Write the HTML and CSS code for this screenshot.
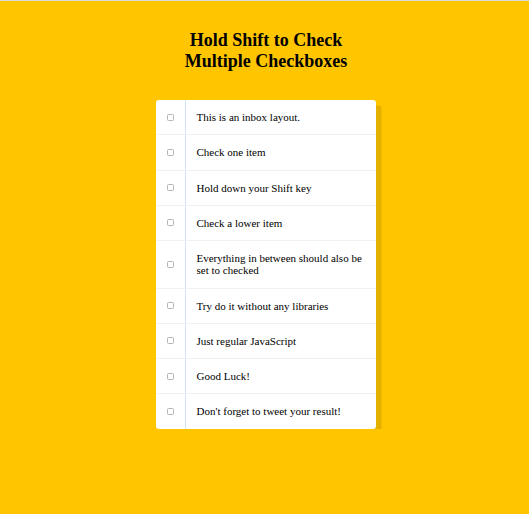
FILE: index.html
```html
<!DOCTYPE html>
<html>
<head>
<meta charset="utf-8">
<link rel="stylesheet" href="styles.css">
</head>
<body>
<h1 class="title">Hold Shift to Check<br>Multiple Checkboxes</h1>
<div class="inbox">
  <div class="item"><input type="checkbox" class="box"><p class="text">This is an inbox layout.</p></div>
  <div class="item"><input type="checkbox" class="box"><p class="text">Check one item</p></div>
  <div class="item"><input type="checkbox" class="box"><p class="text">Hold down your Shift key</p></div>
  <div class="item"><input type="checkbox" class="box"><p class="text">Check a lower item</p></div>
  <div class="item"><input type="checkbox" class="box"><p class="text">Everything in between should also be set to checked</p></div>
  <div class="item"><input type="checkbox" class="box"><p class="text">Try do it without any libraries</p></div>
  <div class="item"><input type="checkbox" class="box"><p class="text">Just regular JavaScript</p></div>
  <div class="item"><input type="checkbox" class="box"><p class="text">Good Luck!</p></div>
  <div class="item"><input type="checkbox" class="box"><p class="text">Don't forget to tweet your result!</p></div>
</div>
</body>
</html>
```
FILE: styles.css
```css
html {
  background: #ffc600;
  border-top: 1px solid #d9d9d9;
}
body {
  margin: 0;
  padding: 29px 0 0;
}
.title,
.text {
  font-family: "Times New Roman", "Liberation Serif", Times, serif;
}
.title {
  margin: 0 0 28px;
  text-align: center;
  font-size: 18px;
  line-height: 21px;
  font-weight: bold;
  color: #000;
  padding-left: 3px;
}
.inbox {
  width: 220px;
  margin: 0 auto;
  position: relative;
  left: 1px;
  background: #fff;
  border-radius: 3px;
  box-shadow: 5.5px 5.5px 0 rgba(0, 0, 0, 0.1);
}
.item {
  display: flex;
  align-items: center;
  border-bottom: 1px solid #f1f1f1;
}
.item:last-child {
  border-bottom: 0;
}
.box {
  appearance: none;
  -webkit-appearance: none;
  width: 7px;
  height: 7px;
  margin: 0 11px;
  border: 1px solid #b5b5b5;
  border-radius: 1.5px;
  background: #fff;
  flex: none;
}
.text {
  margin: 0;
  padding: 11px;
  flex: 1;
  font-size: 11px;
  line-height: 12.25px;
  color: #000;
  border-left: 1px solid #d1e2ff;
}
```
